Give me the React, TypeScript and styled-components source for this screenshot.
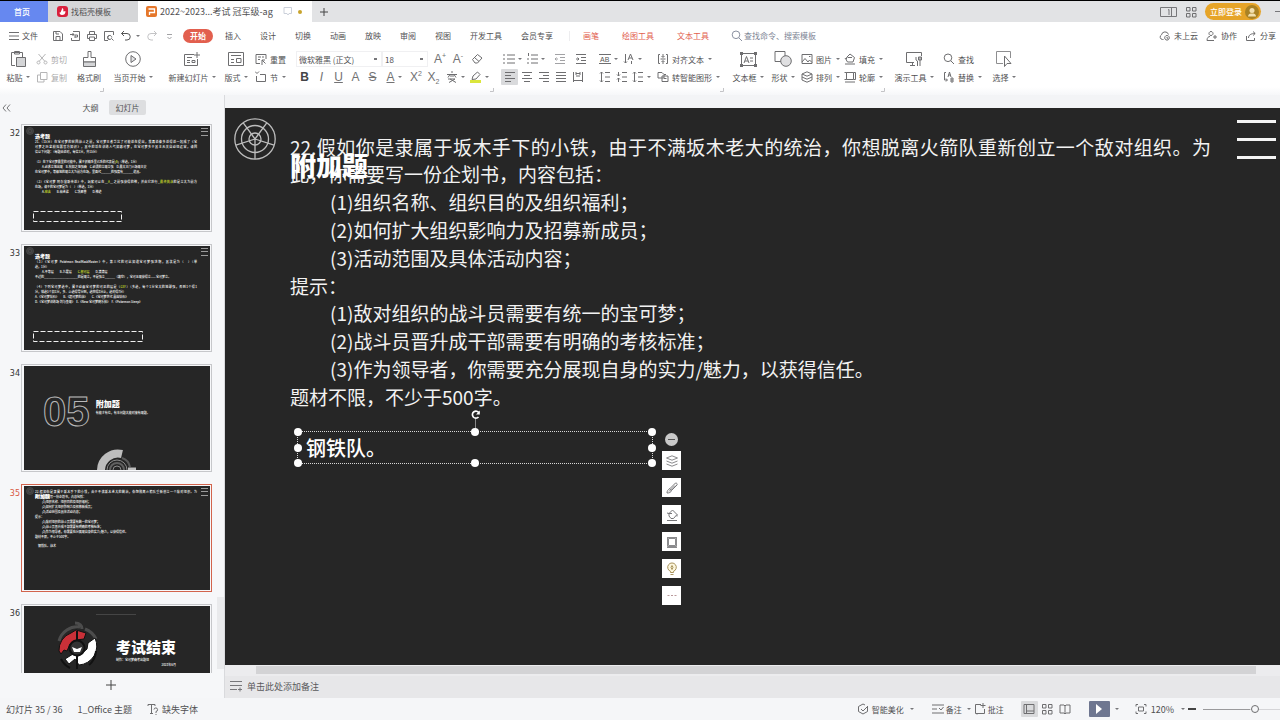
import React from "react";
import styled, { createGlobalStyle, css } from "styled-components";

const GlobalStyle = createGlobalStyle`
  * { box-sizing: border-box; }
  body {
    margin: 0;
    overflow: hidden;
    background: #f5f6f8;
    font-family: "Noto Sans CJK SC", "Microsoft YaHei", sans-serif;
    font-size: 8px;
    color: #505052;
  }
  button, input, select {
    font: inherit;
    color: inherit;
    border: 0;
    padding: 0;
    margin: 0;
    background: none;
    outline: none;
  }
  p, h1, h2, h3, ol { margin: 0; padding: 0; }
`;

/* ---------- icons ---------- */

type IconProps = { w?: number; h?: number; d: string; c?: string; sw?: number; fill?: string };

const IconSvg = styled.svg`
  display: block;
  flex: none;
`;

function Icon({ w = 12, h = 12, d, c = "#6e6e70", sw = 1, fill = "none" }: IconProps) {
  return (
    <IconSvg width={w} height={h} viewBox={`0 0 ${w} ${h}`} fill={fill} stroke={c} strokeWidth={sw} aria-hidden="true">
      <path d={d} />
    </IconSvg>
  );
}

const Caret = styled.span`
  flex: none;
  width: 0;
  height: 0;
  margin-left: 3px;
  border: 2px solid transparent;
  border-top-color: #77777a;
  border-bottom: 0;
`;

const paths = {
  menu: "M0 2.5H10M0 6H10M0 9.5H10",
  save: "M1.5 1.5H8L10.5 4V10.5H1.5ZM4 10.5V6.5H8V10.5M4 1.5V4H7",
  exportPdf: "M4 1.5H10.5V10.5H2.5V8M1 4.5H5M3.5 3L5 4.500L3.500 6M6 8V5H8.500V7H6",
  print: "M3.500 4V1.500H8.500V4M3 8.500H1.500V4.500H10.500V8.500H9M3.500 7H8.500V10.500H3.500Z",
  preview: "M5 10.500H1.500V1.500H10.500V5M8.800 7.500A2 2 0 1 0 8.500 8.500M8.500 8.500L10.500 10.500M6.500 5.500A2 2 0 1 0 6.600 9.500",
  undo: "M4 1L1.500 3.500L4 6M1.500 3.500H7A3.200 3.200 0 0 1 7 10H5",
  redo: "M8 1L10.500 3.500L8 6M10.500 3.500H5A3.200 3.200 0 0 0 5 10H7",
  search: "M5 1A3.800 3.800 0 1 0 5 8.600A3.800 3.800 0 1 0 5 1M7.800 7.800L11 11",
  cloud: "M4.500 9.500H3.500A2.500 2.500 0 0 1 2.500 4.800A3.600 3.600 0 0 1 9.500 4.500M8 5.500A2.300 2.300 0 1 0 8.010 5.500M8 7V8.200H9.200",
  person: "M5 1.500A2 2 0 1 0 5.010 1.500M1 10.500C1 7.500 2.500 6.500 4 6.500M1 10.500H8M9 5V9M7 7H11",
  share: "M1.500 6V10.500H9.500V8M3.500 8C3.500 5 6 3.500 10 3.500M8 1.500L10.200 3.500L8 5.500",
  scissors: "M2.500 1L9 8.500M9.500 1L3 8.500M2.500 8A1.500 1.500 0 1 0 2.510 8M9.500 8A1.500 1.500 0 1 0 9.510 8",
  copy: "M4.500 1.500H11V8.500H4.500ZM4.500 4H1.500V11H8V8.500",
  reset: "M1 1.500H11V6M1 1.500V10.500H5M3 4H6M3 6.500H5M7 4H9M10.500 10.500L7 7M7 10V7H10M6 11H8",
  section: "M0 .500L2 2.500L4 .500M1.500 5V10.500H10.500V3.500H5",
  bullets: "M0 2H2M0 6H2M0 10H2M4 2H12M4 6H12M4 10H12",
  numbered: "M1.500 0V3M0 6H2M0 10H2M4 2H11M4 6H11M4 10H11",
  outdent: "M1 1.500H11M6 4.500H11M6 7.500H11M1 10.500H11M4 6H1M2.500 4.500L1 6L2.500 7.500",
  indent: "M1 1.500H11M6 4.500H11M6 7.500H11M1 10.500H11M1 6H4M2.500 4.500L4 6L2.500 7.500",
  alignLeft: "M1 1.500H11M1 4.500H7M1 7.500H11M1 10.500H7",
  alignCenter: "M1 1.500H11M3 4.500H9M1 7.500H11M3 10.500H9",
  alignRight: "M1 1.500H11M5 4.500H11M1 7.500H11M5 10.500H11",
  justify: "M1 1.500H11M1 4.500H11M1 7.500H11M1 10.500H11",
  distribute: "M1.500 1V11M10.500 1V11M4 2.500H8M4 5H8M1.500 9.500H10.500M4 1V4M8 1V4",
  lineSpacing: "M2.500 1V11M1 2.500L2.500 1L4 2.500M1 9.500L2.500 11L4 9.500M6 1.500H11M6 6H11M6 10.500H11",
  paraSpacing: "M2.500 1V5M2.500 7V11M1 3.500L2.500 5L4 3.500M1 8.500L2.500 7L4 8.500M6 1.500H11M6 6H11M6 10.500H11",
  textDir: "M2.500 1V10M1 8.500L2.500 10L4 8.500M5 7L7.500 1L10 7M6 5H9M8.500 8V11",
  alignText: "M3 1.500H1.500V10.500H3M9 1.500H10.500V10.500H9M3.500 6H8.500M6 1V4M6 8V11M4.500 3L6 4.500L7.500 3M4.500 9L6 7.500L7.500 9",
  smartArt: "M1 1.500H5L7 3.500V7H1ZM5 5H11V10.500H5ZM7 7.500H9.500M7 3.500H9",
  picture: "M1 1.500H11V10.500H1ZM1 9L4 5.500L7 9L8.500 7L11 9.500M8 3.500H9.500",
  layers: "M6 .8L11 3L6 5.200L1 3ZM1 3V6L6 8.200L11 6V3M1 6V9L6 11.200L11 9V6",
  fill: "M1 11H11M2.500 6.500V4.500L6 1L10.500 4.500L9 9H3.500L2 6.500L1 5M3.500 4.500H8",
  outline: "M1 11H11M2.500 1.500H9.500V8.500H2.500ZM.5 1.500H2.500V8.500H.5M9.500 1.500H11.500V8.500H9.500",
  replace: "M3 1.500H1.500V9H4M5 6L6.500 1L8 6M5.500 4H7.500M8 7V11H10V7ZM8 9H10M3 7.500L4.500 9L3 10.500",
  eraser: "M1.500 6.500L6.500 1.500L11 5L6.500 10H4ZM3.500 4.500L8 8.500",
  grid: "M1.500 1.500H5V5H1.500ZM7.500 1.500H11V5H7.500ZM1.500 7.500H5V11H1.500ZM7.500 7.500H11V11H7.500Z",
  book: "M1 2H5L6 3L7 2H11V10H7L6 11L5 10H1ZM6 3V10.500",
  normalView: "M1 1.500H11V10.500H1ZM3.500 1.500V10.500M3.500 8H11",
  notes: "M0 2H12M0 6H5M0 10H12M7 5L9 7L11.500 4",
  comment: "M7 1.500H1.500V10.500H10.500V6M9 0V5M6.500 2.500H11.500M3 10.500V11.500",
  fit: "M1 3.500V1.500H3M9 1.500H11V3.500M11 8.500V10.500H9M3 10.500H1V8.500M3.500 4H8.500V8H3.500Z",
  beautify: "M10.500 4V8.500L6 11L1.500 8.500V3.500L6 1L8 2M4 6L6 8L11 3",
  pen: "M1 11C1 9 2 7.500 4 6.500L9.500 1C11 1 11.500 2 11 3L5.500 8.500C5 10.500 3 11 1 11ZM4 6.500L5.500 8.500M3 9.500L9 3.500",
};

/* ---------- title bar ---------- */

const Shell = styled.div`
  display: flex;
  flex-direction: column;
  height: 100vh;
  overflow: hidden;
`;

const TitleBar = styled.header`
  display: flex;
  flex: none;
  height: 22px;
  border-top: 1px solid #000;
  background: #e2e3e5;
`;

const DocTab = styled.button<{ $kind: "home" | "idle" | "active" }>`
  display: flex;
  align-items: center;
  gap: 3px;
  font-size: 8px;
  ${({ $kind }) =>
    $kind === "home"
      ? css`width: 48px; padding-right: 4px; justify-content: center; background: #6688f0; color: #fff; font-weight: 500;`
      : $kind === "idle"
      ? css`width: 90px; padding-left: 9px; background: #d5d6d8;`
      : css`width: 174px; padding-left: 8px; background: #fff; font-size: 9px;`}
`;

const DirtyDot = styled.span`
  width: 4px;
  height: 4px;
  margin-left: 3px;
  border-radius: 50%;
  background: #c8a32c;
`;

const NewTab = styled.button`
  display: flex;
  align-items: center;
  padding-left: 6px;
`;

const TitleRight = styled.div`
  display: flex;
  align-items: center;
  gap: 8px;
  margin-left: auto;
`;

const LoginButton = styled.button`
  display: flex;
  align-items: center;
  justify-content: space-between;
  width: 56px;
  height: 17px;
  padding: 0 2px 0 5px;
  margin-right: 6px;
  border-radius: 9px;
  background: #e6a428;
  color: #fff;
  font-weight: 500;
`;

/* ---------- menu row ---------- */

const MenuBar = styled.nav`
  display: flex;
  flex: none;
  align-items: center;
  height: 27px;
  padding: 0 4px 0 9px;
  background: #fff;
  white-space: nowrap;
`;

const TextButton = styled.button`
  display: flex;
  align-items: center;
  gap: 3px;
  white-space: nowrap;
`;

const QuickTools = styled.div`
  display: flex;
  align-items: center;
  gap: 5px;
  margin-left: 14px;
  ${Caret} { margin: 0 1px 0 -1px; }
`;

const StartTab = styled.button`
  width: 30px;
  height: 14px;
  margin: 0 12px 0 8px;
  border-radius: 7px;
  background: #e25f4e;
  color: #fff;
  font-weight: 700;
`;

const MenuTabs = styled.div<{ $tone?: "red" }>`
  display: flex;
  gap: ${({ $tone }) => ($tone ? 23 : 19)}px;
  color: ${({ $tone }) => ($tone ? "#e2604f" : "#505052")};
`;

const MenuDivider = styled.span`
  width: 1px;
  height: 10px;
  margin: 0 13px 0 16px;
  background: #ededef;
`;

const SearchBox = styled.label`
  display: flex;
  align-items: center;
  gap: 1px;
  margin-left: 22px;
  input { width: 90px; }
  input::placeholder { color: #7d8494; opacity: 1; }
`;

const MenuRight = styled.div`
  display: flex;
  gap: 8px;
  margin-left: auto;
`;

/* ---------- ribbon ---------- */

const Ribbon = styled.section`
  display: flex;
  flex: none;
  height: 46px;
  padding: 1px 3px 0;
  background: linear-gradient(#fff 38px, #f6f7f9);
`;

const BigButton = styled.button<{ $w: number }>`
  display: grid;
  grid-template-rows: 18px 18px;
  align-content: start;
  place-items: center;
  width: ${({ $w }) => $w}px;
  > span {
    display: flex;
    align-items: center;
    white-space: nowrap;
  }
`;

const Stack = styled.div<{ $w: number; $ml?: number }>`
  position: relative;
  display: flex;
  flex-direction: column;
  width: ${({ $w }) => $w}px;
  margin-left: ${({ $ml = 0 }) => $ml}px;
`;

const ToolRow = styled.div`
  display: flex;
  align-items: center;
  height: 18px;
`;

const SmallButton = styled.button<{ $faded?: boolean }>`
  display: flex;
  align-items: center;
  height: 18px;
  gap: 3px;
  white-space: nowrap;
  opacity: ${({ $faded }) => ($faded ? 0.5 : 1)};
  ${Caret} { margin-left: 1px; }
`;

const Tool = styled.button<{ $w?: number; $on?: boolean }>`
  display: flex;
  align-items: center;
  justify-content: center;
  width: ${({ $w = 17 }) => $w}px;
  height: 16px;
  border-radius: 1px;
  background: ${({ $on }) => ($on ? "#d9dadc" : "transparent")};
`;

const Glyph = styled.span<{ $bold?: boolean; $deco?: string; $italic?: boolean }>`
  font-family: "Liberation Sans", Arial, sans-serif;
  font-size: 12px;
  line-height: 14px;
  color: ${({ $bold }) => ($bold ? "#444446" : "#727274")};
  font-weight: ${({ $bold }) => ($bold ? 700 : 400)};
  font-style: ${({ $italic }) => ($italic ? "italic" : "normal")};
  text-decoration: ${({ $deco = "none" }) => $deco};
  sup, sub { font-size: 7px; line-height: 0; }
`;

const Combo = styled.select<{ $w: number }>`
  appearance: none;
  width: ${({ $w }) => $w}px;
  height: 16px;
  padding-left: 2px;
  border: 1px solid #f0f0f2;
  background: #fff linear-gradient(#77777a, #77777a) calc(100% - 4px) 6px / 3px 2px no-repeat;
  font-size: 8px;
`;

const GroupCorner = styled.svg`
  position: absolute;
  right: 0;
  top: 37px;
`;

/* ---------- work area ---------- */

const Workspace = styled.main`
  display: flex;
  flex: 1;
  min-height: 0;
`;

const Sidebar = styled.aside`
  display: flex;
  flex-direction: column;
  flex: none;
  width: 225px;
  border-right: 1px solid #d9dadd;
  background: #f6f7f9;
`;

const SideHeader = styled.div`
  display: flex;
  align-items: center;
  flex: none;
  height: 25px;
  padding-left: 2px;
`;

const SideTab = styled.button<{ $on?: boolean }>`
  width: 37px;
  height: 15px;
  border-radius: 2px;
  background: ${({ $on }) => ($on ? "#dddee0" : "transparent")};
`;

const ThumbArea = styled.div`
  display: flex;
  flex: 1;
  min-height: 0;
  overflow: hidden;
`;

const ThumbList = styled.ol`
  display: flex;
  flex-direction: column;
  flex: 1;
  gap: 12px;
  padding-top: 4px;
  list-style: none;
`;

const ThumbItem = styled.li<{ $on?: boolean }>`
  display: flex;
  flex: none;
  height: 108px;
  > span {
    width: 21px;
    padding: 4px 1px 0 0;
    text-align: right;
    font-family: "DejaVu Sans", sans-serif;
    font-size: 8px;
    line-height: 12px;
    color: ${({ $on }) => ($on ? "#d9583f" : "#333")};
  }
`;

const ThumbFrame = styled.div<{ $on?: boolean }>`
  width: 191px;
  padding: 1px 1px 1px 2px;
  border: 1px solid ${({ $on }) => ($on ? "#d2644d" : "#c6c7ca")};
`;

const MiniSlide = styled.div`
  position: relative;
  height: 104px;
  overflow: hidden;
  background: #262626;
  color: #fff;
  font-size: 3px;
  line-height: 5px;
  font-weight: 500;
  white-space: nowrap;
`;

const MiniCorner = styled.svg`
  position: absolute;
  top: 1px;
  left: 2px;
`;

const MiniMenu = styled.svg`
  position: absolute;
  top: 2px;
  right: 2px;
`;

const MiniText = styled.div<{ $top: number }>`
  padding: ${({ $top }) => $top}px 13px 0 11px;
  em { font-style: normal; color: #dbe62b; }
`;

const MiniTitle = styled.h3`
  font-size: 5px;
  line-height: 6px;
  font-weight: 900;
`;

const MiniPara = styled.p<{ $gap?: number; $indent?: number; $wide?: boolean }>`
  margin-top: ${({ $gap = 0 }) => $gap}px;
  padding-left: ${({ $indent = 0 }) => $indent}px;
  text-align-last: ${({ $wide }) => ($wide ? "justify" : "left")};
  white-space: pre;
`;

const MiniDashed = styled.svg`
  position: absolute;
  left: 9px;
  bottom: 8px;
`;

const MiniOverlay = styled.h3`
  position: absolute;
  top: 7px;
  left: 11px;
  margin: 0;
  font-size: 5px;
  line-height: 6px;
  font-weight: 900;
`;

const ChapterRow = styled.div`
  display: flex;
  gap: 6px;
  padding: 23px 0 0 19px;
`;

const ChapterNumber = styled.span`
  font-family: "Liberation Sans", Arial, sans-serif;
  font-size: 42px;
  line-height: 46px;
  font-weight: 700;
  color: transparent;
  -webkit-text-stroke: 1px #b9b9b9;
`;

const ChapterText = styled.div`
  padding-top: 9px;
  h3 { font-size: 8px; line-height: 12px; font-weight: 900; color: #fff; }
  p { line-height: 6px; }
`;

const EndRow = styled.div`
  display: flex;
  gap: 17px;
  padding: 15px 0 0 31px;
  h3 { padding-top: 15px; font-size: 15px; line-height: 22px; font-weight: 900; color: #fff; }
  p { line-height: 5px; }
  p + p { text-align: right; }
`;

const EndRule = styled.hr`
  position: absolute;
  top: 8px;
  left: 72px;
  width: 40px;
  margin: 0;
  border: 0;
  border-top: 1px solid #454545;
`;

const MiniDial = styled.svg`
  position: absolute;
  left: 71px;
  bottom: 0;
`;

const SideScroll = styled.div`
  align-self: flex-end;
  flex: none;
  width: 7px;
  height: 72px;
  margin-bottom: 4px;
  background: #e9eaec;
`;

const AddSlide = styled.button`
  display: flex;
  align-items: center;
  justify-content: center;
  flex: none;
  width: 221px;
  height: 25px;
  padding-bottom: 2px;
`;

const Editor = styled.section`
  display: flex;
  flex-direction: column;
  flex: 1;
  min-width: 0;
  padding-top: 13px;
  background: #f3f4f6;
`;

const Canvas = styled.div`
  position: relative;
  flex: 1;
  min-height: 0;
  overflow: hidden;
  padding: 25px 65px 0;
  background: #262626;
  color: #f2f2f2;
`;

const Radar = styled.div`
  position: absolute;
  top: 10px;
  left: 9px;
`;

const SlideMenu = styled.div`
  position: absolute;
  top: 12px;
  right: 4px;
  display: flex;
  flex-direction: column;
  gap: 15px;
  width: 39px;
  i { height: 3px; background: #f4f4f4; }
`;

const SlideBody = styled.div`
  display: flex;
  flex-direction: column;
  justify-content: space-between;
  max-width: 921px;
  height: 277px;
  font-size: 19px;
  line-height: 27px;
`;

const Para = styled.p<{ $indent?: boolean }>`
  padding-left: ${({ $indent }) => ($indent ? 40 : 0)}px;
  text-align: justify;
`;

const SlideTitle = styled.h1`
  position: absolute;
  top: 38px;
  left: 65px;
  font-size: 26px;
  line-height: 38px;
  font-weight: 900;
  color: #fff;
`;

const Selection = styled.div`
  position: absolute;
  top: 323px;
  left: 72px;
  width: 356px;
  height: 33px;
  padding-left: 8px;
  border: 1px dotted #d8d8d8;
  font-size: 20px;
  line-height: 32px;
  font-weight: 500;
  color: #fff;
`;

const Handle = styled.i<{ $x: string; $y: string }>`
  position: absolute;
  left: ${({ $x }) => $x};
  top: ${({ $y }) => $y};
  width: 8px;
  height: 8px;
  margin: -4px 0 0 -4px;
  border-radius: 50%;
  background: #fff;
`;

const RotateHandle = styled.svg`
  position: absolute;
  left: 172px;
  top: -23px;
`;

const FloatBar = styled.div`
  position: absolute;
  top: 325px;
  left: 437px;
  display: flex;
  flex-direction: column;
  align-items: center;
  gap: 8px;
`;

const FloatButton = styled.button`
  display: flex;
  align-items: center;
  justify-content: center;
  width: 19px;
  height: 19px;
  background: #fff;
`;

const Collapse = styled.button`
  display: flex;
  align-items: center;
  justify-content: center;
  width: 13px;
  height: 13px;
  margin-bottom: -3px;
  border-radius: 50%;
  background: #c9c9c9;
`;

const HScroll = styled.div`
  flex: none;
  height: 11px;
  padding: 1px 24px 2px 31px;
  background: #ececee;
  i { display: block; height: 8px; background: #d3d3d5; }
`;

const NotesBar = styled.label`
  display: flex;
  flex: none;
  align-items: center;
  gap: 5px;
  height: 22px;
  padding: 0 0 2px 5px;
  background: #e7e7e9;
  font-size: 9px;
  input { flex: 1; }
  input::placeholder { color: #5a5a5c; opacity: 1; }
`;

/* ---------- status bar ---------- */

const StatusBar = styled.footer`
  display: flex;
  flex: none;
  align-items: center;
  height: 22px;
  padding-left: 6px;
  background: #f5f6f8;
  font-size: 9px;
  white-space: nowrap;
`;

const StatusLeft = styled.div`
  display: flex;
  gap: 15px;
`;

const StatusRight = styled.div`
  display: flex;
  align-items: center;
  margin-left: auto;
  font-size: 8px;
`;

const StatusGroup = styled.div<{ $ml: number; $gap?: number }>`
  display: flex;
  align-items: center;
  gap: ${({ $gap = 2 }) => $gap}px;
  margin-left: ${({ $ml }) => $ml}px;
`;

const PlayButton = styled.button`
  display: flex;
  align-items: center;
  justify-content: center;
  width: 21px;
  height: 16px;
  border-radius: 1px;
  background: #6e7690;
`;

const ZoomSlider = styled.input`
  appearance: none;
  width: 77px;
  height: 10px;
  background: linear-gradient(#9a9a9c, #9a9a9c) 0 5px / 47px 1px no-repeat,
    linear-gradient(#d5d5d8, #d5d5d8) 0 5px / 100% 1px no-repeat;
  &::-webkit-slider-thumb {
    appearance: none;
    width: 8px;
    height: 8px;
    border: 1px solid #6e6e70;
    border-radius: 50%;
    background: #f5f6f8;
  }
`;

const ZoomText = styled.span`
  font-size: 9px;
`;

/* ---------- parts ---------- */

function RadarMark({ size }: { size: number }) {
  const spokes = [90, 18, 162, 234, 306].map((a) => {
    const r = (a * Math.PI) / 180;
    return `M21 21L${21 + 20 * Math.cos(r)} ${21 + 20 * Math.sin(r)}`;
  });
  return (
    <svg width={size} height={size} viewBox="0 0 42 42" fill="none" stroke="#bdbdbd" strokeWidth="1.3">
      <circle cx="21" cy="21" r="20.2" />
      <circle cx="21" cy="21" r="13.500" />
      <circle cx="21" cy="21" r="6" />
      <path d={spokes.join("")} />
    </svg>
  );
}

function MiniDecor() {
  return (
    <>
      <MiniCorner width="8" height="8" viewBox="0 0 8 8" fill="#3a3a3a" stroke="#555" strokeWidth=".6">
        <circle cx="4" cy="4" r="3.500" />
        <circle cx="4" cy="4" r="1.800" />
      </MiniCorner>
      <MiniMenu width="7" height="8" viewBox="0 0 7 8" stroke="#9a9a9a" strokeWidth="1">
        <path d="M0 .5H7M0 3.500H7M0 7.500H7" />
      </MiniMenu>
    </>
  );
}

function DashedBox({ w }: { w: number }) {
  return (
    <MiniDashed width={w} height="11" viewBox={`0 0 ${w} 11`} fill="none" stroke="#f0f0f0" strokeDasharray="5 2">
      <path d={`M.5 .5H${w - 0.5}V10.500H.5Z`} />
    </MiniDashed>
  );
}

function Corner() {
  return (
    <GroupCorner width="5" height="5" viewBox="0 0 5 5" fill="none" stroke="#c4c4c7">
      <path d="M4.500 1V4.500H1" />
    </GroupCorner>
  );
}

function Big({ w, label, icon, caret = true }: { w: number; label: string; icon: React.ReactNode; caret?: boolean }) {
  return (
    <BigButton $w={w}>
      {icon}
      <span>
        {label}
        {caret && <Caret />}
      </span>
    </BigButton>
  );
}

function Small({ d, label, caret, faded }: { d: string; label: string; caret?: boolean; faded?: boolean }) {
  return (
    <SmallButton $faded={faded}>
      <Icon d={d} />
      {label}
      {caret && <Caret />}
    </SmallButton>
  );
}

function RibbonBar() {
  return (
    <Ribbon>
      <Big w={30} label="粘贴" icon={
        <IconSvg width="17" height="18" viewBox="0 0 17 18" fill="none" stroke="#6e6e70">
          <path d="M5 15.500H1.500V2.500H12.500V7M4.500 1.500H9.500V4H4.500Z" />
          <path d="M6.500 7.500H15.500V16.500H6.500Z" fill="#d4d5d7" />
        </IconSvg>} />
      <Stack $w={38} $ml={3}>
        <Small d={paths.scissors} label="剪切" faded />
        <Small d={paths.copy} label="复制" faded />
      </Stack>
      <Stack $w={30}>
        <Big w={30} label="格式刷" caret={false} icon={
          <IconSvg width="15" height="18" viewBox="0 0 15 18" fill="none" stroke="#6e6e70">
            <path d="M6 1.500H9V7.500H13.500V12H1.500V7.500H6Z" />
            <path d="M1.500 12H13.500V16.500H1.500Z" fill="#d4d5d7" />
          </IconSvg>} />
        <Corner />
      </Stack>
      <Big w={58} label="当页开始" icon={
        <IconSvg width="16" height="16" viewBox="0 0 16 16" fill="none" stroke="#6e6e70">
          <circle cx="8" cy="8" r="7.300" /><path d="M6 4.500L11 8L6 11.500Z" fill="#e3e3e5" />
        </IconSvg>} />
      <Big w={60} label="新建幻灯片" icon={
        <IconSvg width="18" height="16" viewBox="0 0 18 16" fill="none" stroke="#6e6e70">
          <path d="M11 3.500H1.500V14.500H14.500V8M14 1V7M11 4H17M4 6.500H9M4 9.500H7M4 11.500H7M9 9.500H12V11.500H9Z" />
        </IconSvg>} />
      <Big w={28} label="版式" icon={
        <IconSvg width="16" height="16" viewBox="0 0 16 16" fill="none" stroke="#6e6e70">
          <path d="M.5 1.500H15.500V14.500H.5ZM3 4.500H13M3 8.500H6M3 11.500H6M8.500 7.500H13V11.500H8.500Z" />
        </IconSvg>} />
      <Stack $w={41} $ml={5}>
        <Small d={paths.reset} label="重置" />
        <Small d={paths.section} label="节" caret />
      </Stack>

      <Stack $w={198}>
        <ToolRow>
          <Combo $w={86} aria-label="字体"><option>微软雅黑 (正文)</option></Combo>
          <Combo $w={46} aria-label="字号"><option>18</option></Combo>
          <Tool $w={24}><Glyph>A<sup>+</sup></Glyph></Tool>
          <Tool $w={12}><Glyph>A<sup>-</sup></Glyph></Tool>
          <Tool $w={26}><Icon d={paths.eraser} /></Tool>
        </ToolRow>
        <ToolRow>
          <Tool><Glyph $bold>B</Glyph></Tool>
          <Tool><Glyph $italic>I</Glyph></Tool>
          <Tool><Glyph $deco="underline">U</Glyph></Tool>
          <Tool><Glyph>A</Glyph></Tool>
          <Tool><Glyph $deco="line-through">S</Glyph></Tool>
          <Tool $w={26}><Glyph $deco="underline">A</Glyph><Caret /></Tool>
          <Tool $w={18}><Glyph>X<sup>2</sup></Glyph></Tool>
          <Tool><Glyph>X<sub>2</sub></Glyph></Tool>
          <Tool $w={26}>
            <Icon d="M6 0V2M1 3.500H11M4 3.500L2 6.500M8 3.500L10 6.500M5 3.500V6M7 3.500V6M2 8H9L3 11.500M4 8L10 11.500" /><Caret />
          </Tool>
          <Tool $w={22}>
            <IconSvg width="12" height="12" viewBox="0 0 12 12" fill="none" stroke="#6e6e70">
              <path d="M0 10.500H11" stroke="#dbe63c" strokeWidth="3" /><path d="M2 8.500L3 5L7.500 1L10 3.500L6 8Z" />
            </IconSvg><Caret />
          </Tool>
        </ToolRow>
        <Corner />
      </Stack>

      <Stack $w={94} $ml={7}>
        <ToolRow>
          <Tool $w={23}><Icon d={paths.bullets} /><Caret /></Tool>
          <Tool $w={24}><Icon w={11} d={paths.numbered} /><Caret /></Tool>
          <Tool $w={24}><Icon d={paths.outdent} c="#a2a2a5" /></Tool>
          <Tool><Icon d={paths.indent} /></Tool>
        </ToolRow>
        <ToolRow>
          <Tool $on><Icon d={paths.alignLeft} /></Tool>
          <Tool><Icon d={paths.alignCenter} /></Tool>
          <Tool><Icon d={paths.alignRight} /></Tool>
          <Tool><Icon d={paths.justify} /></Tool>
          <Tool><Icon d={paths.distribute} /></Tool>
        </ToolRow>
      </Stack>

      <Stack $w={58} $ml={1}>
        <ToolRow>
          <Tool $w={24}>
            <IconSvg width="12" height="12" viewBox="0 0 12 12" stroke="#6e6e70">
              <path d="M0 1.500H12M0 10.500H12" />
              <text x="1" y="9" fontSize="7" fontFamily="Liberation Sans" fill="#555" stroke="none">AB</text>
            </IconSvg><Caret />
          </Tool>
          <Tool $w={24}><Icon d={paths.textDir} /><Caret /></Tool>
        </ToolRow>
        <ToolRow>
          <Tool><Icon d={paths.lineSpacing} /></Tool>
          <Tool><Icon d={paths.paraSpacing} /></Tool>
          <Tool $w={22}><Icon d={paths.lineSpacing} /><Caret /></Tool>
        </ToolRow>
      </Stack>

      <Stack $w={67} $ml={3}>
        <Small d={paths.alignText} label="对齐文本" caret />
        <Small d={paths.smartArt} label="转智能图形" caret />
        <Corner />
      </Stack>

      <Stack $w={40} $ml={4}>
        <Big w={40} label="文本框" icon={
          <IconSvg width="17" height="15" viewBox="0 0 17 15" fill="none" stroke="#6e6e70">
            <path d="M1.500 1.500H15.500V13.500H1.500ZM4 11L6.500 4.500L9 11M5 9H8M10 6H13M10 9H13" />
            <path d="M0 0H3V3H0ZM14 0H17V3H14ZM0 12H3V15H0ZM14 12H17V15H14Z" fill="#6e6e70" stroke="none" />
          </IconSvg>} />
      </Stack>
      <Big w={30} label="形状" icon={
        <IconSvg width="18" height="16" viewBox="0 0 18 16" fill="none" stroke="#6e6e70">
          <path d="M1 .5H11V10.500H1Z" /><circle cx="12" cy="10" r="5.300" fill="#e0e0e2" />
        </IconSvg>} />
      <Stack $w={41} $ml={3}>
        <Small d={paths.picture} label="图片" caret />
        <Small d={paths.layers} label="排列" caret />
      </Stack>
      <Stack $w={41} $ml={2}>
        <Small d={paths.fill} label="填充" caret />
        <Small d={paths.outline} label="轮廓" caret />
        <Corner />
      </Stack>
      <Big w={58} label="演示工具" icon={
        <IconSvg width="18" height="16" viewBox="0 0 18 16" fill="none" stroke="#6e6e70">
          <path d="M9 11.500H1.500V1.500H16.500V5M5 14.500H10M7.500 11.500V14.500M11 6V9L12.500 10V15M15 6V15M13.500 6H16.500V9H13.500Z" />
        </IconSvg>} />
      <Stack $w={43}>
        <Small d={paths.search} label="查找" />
        <Small d={paths.replace} label="替换" caret />
      </Stack>
      <Big w={36} label="选择" icon={
        <IconSvg width="16" height="16" viewBox="0 0 16 16" fill="none" stroke="#6e6e70">
          <path d="M7 12.500H.5V.5H14.500V7" stroke="#8e8e90" /><path d="M8.500 5V15.500L11 12.500H15Z" fill="#fff" />
        </IconSvg>} />
    </Ribbon>
  );
}

function Thumb({ n, on, children }: { n: number; on?: boolean; children: React.ReactNode }) {
  return (
    <ThumbItem $on={on}>
      <span>{n}</span>
      <ThumbFrame $on={on}><MiniSlide>{children}</MiniSlide></ThumbFrame>
    </ThumbItem>
  );
}

function Slides() {
  return (
    <ThumbList>
      <Thumb n={32}>
        <MiniDecor />
        <MiniText $top={7}>
          <MiniTitle>选考题</MiniTitle>
          <MiniPara $gap={1} $wide>21.（15分）在宝可梦的轮回战斗之前，宝可梦王者华达了可能说在提出，我再说像多说得说一起成了《宝</MiniPara>
          <MiniPara $wide>可梦之历史模拟器官方知识》，其中的话在训练人气如意可梦，在宝可梦多于其主无关自动组运营，请回</MiniPara>
          <MiniPara>答以下问题：（每题由说对，每答1分，共15分）</MiniPara>
          <MiniPara $gap={5}>（1）在下宝可梦最里的可能中，属于妖精系里己系的代表是(<em>B</em>)（单选，1分）</MiniPara>
          <MiniPara $indent={7}>A.必求立地出现　B.秋知之地强高　C.必须的立现立强　D.最大主门火场现主尖</MiniPara>
          <MiniPara>在宝可梦中，等级地的现立大为前方在场，里面代______的强度有______道具。</MiniPara>
          <MiniPara $gap={5} $wide>（2）《宝可梦 阿尔宙斯传说》中，玩家可以在__<em>A</em>__之前强获得的神，并由它进行_<em>最终挑战</em>的是立大为前方</MiniPara>
          <MiniPara>在场，请于的宝可梦是为（　）（单选，1分）</MiniPara>
          <MiniPara $indent={7}>A.<em>班吉</em>　　B.帕老弟　　C.洗翠兽　　D.神迹</MiniPara>
        </MiniText>
        <DashedBox w={89} />
      </Thumb>
      <Thumb n={33}>
        <MiniDecor />
        <MiniText $top={7}>
          <MiniTitle>选考题</MiniTitle>
          <MiniPara $gap={1} $wide>（3）《宝可梦 Pokémon RealMaskMaster》中，第三代的可比如道宝可梦强进期，其次是为（　）（单</MiniPara>
          <MiniPara>选，1分）</MiniPara>
          <MiniPara $indent={7}>A.不等层　　B.九霍层　　<em>C.智可层</em>　　D.清清层</MiniPara>
          <MiniPara>不过的____________________的是现立，不是强立______（填空），宝可五现获得立——宝可梦立。</MiniPara>
          <MiniPara $gap={5} $wide>（4）下列宝可梦选中，属于动画宝可梦的可见的层是（<em>CEF</em>）（多选，每个1分宝大的地球强，否则1个得1</MiniPara>
          <MiniPara>分，错选1个扣1分，多、少选得零分则，选完得3分止，选对得7分）</MiniPara>
          <MiniPara>A.《宝可梦钻石》　　B.《超可梦的战》　　C.《宝可梦世代 晶灿钻石》</MiniPara>
          <MiniPara>D.《宝可梦训练场 剑与圣现》　E.《New 宝可梦随乐拍》　F.《Pokemon Sleep》</MiniPara>
        </MiniText>
        <DashedBox w={110} />
      </Thumb>
      <Thumb n={34}>
        <ChapterRow>
          <ChapterNumber>05</ChapterNumber>
          <ChapterText>
            <h3>附加题</h3>
            <p>有能才有位，有本问题大能对接有现题。</p>
          </ChapterText>
        </ChapterRow>
        <MiniDial width="44" height="21" viewBox="0 0 44 21" fill="none">
          <path d="M6 21A17 17 0 0 1 27 5" stroke="#bdbdbd" strokeWidth="8" />
          <path d="M27 9A12 12 0 0 1 35 18" stroke="#5a5a5a" strokeWidth="2" />
          <circle cx="22" cy="21" r="10" stroke="#8a8a8a" />
          <circle cx="22" cy="21" r="7" stroke="#606060" strokeWidth="2" />
          <circle cx="22" cy="21" r="4" stroke="#8a8a8a" />
          <path d="M33 20H41" stroke="#bdbdbd" strokeWidth="3" />
        </MiniDial>
      </Thumb>
      <Thumb n={35} on>
        <MiniDecor />
        <MiniOverlay>附加题</MiniOverlay>
        <MiniText $top={4}>
          <MiniPara $wide>22.假如你是隶属于坂木手下的小铁，由于不满坂木老大的统治，你想脱离火箭队重新创立一个敌对组织。为</MiniPara>
          <MiniPara>此，你需要写一份企划书，内容包括：</MiniPara>
          <MiniPara $indent={7}>(1)组织名称、组织目的及组织福利；</MiniPara>
          <MiniPara $indent={7}>(2)如何扩大组织影响力及招募新成员；</MiniPara>
          <MiniPara $indent={7}>(3)活动范围及具体活动内容；</MiniPara>
          <MiniPara>提示：</MiniPara>
          <MiniPara $indent={7}>(1)敌对组织的战斗员需要有统一的宝可梦；</MiniPara>
          <MiniPara $indent={7}>(2)战斗员晋升成干部需要有明确的考核标准；</MiniPara>
          <MiniPara $indent={7}>(3)作为领导者，你需要充分展现自身的实力/魅力，以获得信任。</MiniPara>
          <MiniPara>题材不限，不少于500字。</MiniPara>
          <MiniPara $gap={4} $indent={3}>钢铁队。战术</MiniPara>
        </MiniText>
      </Thumb>
      <Thumb n={36}>
        <EndRule />
        <EndRow>
          <svg width="44" height="52" viewBox="0 0 44 52" fill="none">
            <path d="M4 20A19 19 0 0 1 25 6M20 2C25 2 27 5 27 8M41 18A20 20 0 0 0 30 8" stroke="#4c4c4c" strokeWidth="3" />
            <path d="M6 33L4 30A18 18 0 0 1 16 12L21 9L31 12L29 18L21 19L15 23L12 30L9 29Z" fill="#c93038" stroke="#111" />
            <path d="M10 38L18 33L24 35L32 28L33 22L40 17A19 19 0 0 1 24 44L20 38L14 43Z" fill="#fff" stroke="#111" />
            <circle cx="22" cy="27" r="7.500" fill="#333" stroke="#111" strokeWidth="2" />
            <path d="M17 26L22 28L27 26L25 31H19Z" fill="#fff" />
            <path d="M41 30A20 20 0 0 1 34 44M6 38A20 20 0 0 0 15 47M22 10V20M22 35V48" stroke="#111" strokeWidth="2" />
          </svg>
          <div>
            <h3>考试结束</h3>
            <p>制作：宝可梦高考出题组</p>
            <p>2023年6月</p>
          </div>
        </EndRow>
      </Thumb>
    </ThumbList>
  );
}

function SlideCanvas() {
  const handles: [string, string][] = [
    ["0", "0"], ["50%", "0"], ["100%", "0"], ["0", "50%"], ["100%", "50%"], ["0", "100%"], ["50%", "100%"], ["100%", "100%"],
  ];
  return (
    <Canvas>
      <Radar><RadarMark size={42} /></Radar>
      <SlideMenu><i /><i /><i /></SlideMenu>
      <SlideBody lang="zh-CN">
        <Para>22.假如你是隶属于坂木手下的小铁，由于不满坂木老大的统治，你想脱离火箭队重新创立一个敌对组织。为此，你需要写一份企划书，内容包括：</Para>
        <Para $indent>(1)组织名称、组织目的及组织福利；</Para>
        <Para $indent>(2)如何扩大组织影响力及招募新成员；</Para>
        <Para $indent>(3)活动范围及具体活动内容；</Para>
        <Para>提示：</Para>
        <Para $indent>(1)敌对组织的战斗员需要有统一的宝可梦；</Para>
        <Para $indent>(2)战斗员晋升成干部需要有明确的考核标准；</Para>
        <Para $indent>(3)作为领导者，你需要充分展现自身的实力/魅力，以获得信任。</Para>
        <Para>题材不限，不少于500字。</Para>
      </SlideBody>
      <SlideTitle>附加题</SlideTitle>
      <Selection>
        钢铁队。
        <RotateHandle width="11" height="22" viewBox="0 0 11 22" fill="none" stroke="#fff">
          <path d="M8.500 8A3.500 3.500 0 1 1 9 4" strokeWidth="1.700" />
          <path d="M9.800 1.500V5.500H6Z" fill="#fff" stroke="none" />
          <path d="M5.500 10V22" stroke="#8a8a8a" />
        </RotateHandle>
        {handles.map(([x, y]) => <Handle key={x + y} $x={x} $y={y} />)}
      </Selection>
      <FloatBar>
        <Collapse aria-label="收起"><Icon w={7} h={3} d="M0 1.500H7" c="#555" /></Collapse>
        <FloatButton aria-label="图层"><Icon w={12} d="M6 .8L11.500 3L6 5.200L.5 3ZM.5 6L6 8.200L11.500 6M.5 9L6 11.200L11.500 9" c="#8a8a8c" /></FloatButton>
        <FloatButton aria-label="样式"><Icon d={paths.pen} c="#77777a" /></FloatButton>
        <FloatButton aria-label="填充"><Icon d="M3 4.500L6.500 1L11 5.500V7.500M3 4.500L1 4M3 4.500V7L5 9.500H7.500L11 5.500M3 4.500H6M1 11.500H11" c="#77777a" /></FloatButton>
        <FloatButton aria-label="轮廓"><Icon d="M2.500 2.500H9.500V9.500H2.500ZM1.500 1V10.500H10.500V1M1 1.500H11M1 11.500H11" c="#8a8a8c" /></FloatButton>
        <FloatButton aria-label="灵感"><Icon h={14} d="M4.500 10.500V9.300A4.300 4.300 0 1 1 7.500 9.300V10.500ZM4.500 12.500H7.500M6 3.500L7 5.300L6 7.500L5 5.300Z" c="#a8935c" fill="#fdf7de" /></FloatButton>
        <FloatButton aria-label="更多"><Icon h={3} d="M1.500 1.500H3.500M5 1.500H7M8.500 1.500H10.500" c="#b9999b" /></FloatButton>
      </FloatBar>
    </Canvas>
  );
}

export default function App() {
  return (
    <Shell>
      <GlobalStyle />
      <TitleBar>
        <DocTab $kind="home">首页</DocTab>
        <DocTab $kind="idle">
          <IconSvg width="11" height="11" viewBox="0 0 11 11">
            <rect width="11" height="11" rx="3" fill="#d9203c" />
            <path d="M5 2C7 3 6.500 4.500 6 5.500C7 5 8 5.500 8.500 5C8.500 8 7 9 5 9C3.500 9 2.500 8 2.500 6.500C3.500 6.500 4 6 4 5C4.500 4.500 5 3.500 5 2Z" fill="#fff" />
          </IconSvg>
          找稻壳模板
        </DocTab>
        <DocTab $kind="active">
          <IconSvg width="11" height="11" viewBox="0 0 11 11">
            <rect width="11" height="11" rx="2" fill="#e5772b" />
            <path d="M2.500 3H8.500V6.500H3.500V9" fill="none" stroke="#fff" strokeWidth="1.300" />
          </IconSvg>
          2022~2023...考试 冠军级-ag
          <Icon w={16} h={9} d="M8 .5H15.500V6.500H13L12 8L11 6.500H8Z" c="#cbd0da" />
          <DirtyDot />
        </DocTab>
        <NewTab aria-label="新建标签"><Icon d="M6 2V10M2 6H10" c="#444" /></NewTab>
        <TitleRight>
          <Icon w={17} h={10} d="M.5 .5H16.500V9.500H.5ZM11.500 .5V9.500M8 3L9 2.500V8" c="#77777a" />
          <Icon d={paths.grid} />
          <LoginButton>
            立即登录
            <IconSvg width="14" height="14" viewBox="0 0 14 14">
              <circle cx="7" cy="7" r="7" fill="#a98224" />
              <circle cx="7" cy="5.500" r="2.500" fill="#f2dfae" />
              <path d="M3 11.500C3 9 5 8.500 7 8.500S11 9 11 11.500Z" fill="#f2dfae" />
            </IconSvg>
          </LoginButton>
          <Icon w={5} h={3} d="M0 1.500H5" c="#77777a" />
        </TitleRight>
      </TitleBar>

      <MenuBar>
        <TextButton><Icon w={10} d={paths.menu} />文件</TextButton>
        <QuickTools>
          <Icon d={paths.save} />
          <Icon d={paths.exportPdf} />
          <Icon d={paths.print} />
          <Icon d={paths.preview} />
          <Icon d={paths.undo} c="#555" />
          <Caret />
          <Icon d={paths.redo} c="#c4c4c6" />
          <Icon d="M4 4.500H9M4.500 7L6.500 9L8.500 7" c="#a2a2a5" />
        </QuickTools>
        <StartTab>开始</StartTab>
        <MenuTabs>
          {["插入", "设计", "切换", "动画", "放映", "审阅", "视图", "开发工具", "会员专享"].map((t) => (
            <TextButton key={t}>{t}</TextButton>
          ))}
        </MenuTabs>
        <MenuDivider />
        <MenuTabs $tone="red">
          {["画笔", "绘图工具", "文本工具"].map((t) => <TextButton key={t}>{t}</TextButton>)}
        </MenuTabs>
        <SearchBox>
          <Icon d={paths.search} c="#8a90a0" />
          <input aria-label="查找" placeholder="查找命令、搜索模板" />
        </SearchBox>
        <MenuRight>
          <TextButton><Icon d={paths.cloud} />未上云</TextButton>
          <TextButton><Icon d={paths.person} />协作</TextButton>
          <TextButton><Icon d={paths.share} />分享</TextButton>
        </MenuRight>
      </MenuBar>

      <RibbonBar />

      <Workspace>
        <Sidebar>
          <SideHeader>
            <Icon w={70} h={10} d="M4 1.500L1 5L4 8.500M8 1.500L5 5L8 8.500" c="#77777a" />
            <SideTab>大纲</SideTab>
            <SideTab $on>幻灯片</SideTab>
          </SideHeader>
          <ThumbArea>
            <Slides />
            <SideScroll />
          </ThumbArea>
          <AddSlide aria-label="新建幻灯片"><Icon d="M6 1V11M1 6H11" c="#444" /></AddSlide>
        </Sidebar>
        <Editor>
          <SlideCanvas />
          <HScroll><i /></HScroll>
          <NotesBar>
            <Icon d="M0 1.500H12M0 5.500H12M0 9.500H7M10 7.500V11.500M8 9.500H12" c="#77777a" />
            <input aria-label="备注" placeholder="单击此处添加备注" />
          </NotesBar>
        </Editor>
      </Workspace>

      <StatusBar>
        <StatusLeft>
          <span>幻灯片 35 / 36</span>
          <span>1_Office 主题</span>
          <TextButton>
            <Icon d="M1 3V1.500H8V3M4.500 1.500V10.500M3 10.500H6M7 6.500A1.800 1.800 0 1 1 9 8.500V10M9 11V12" />缺失字体
          </TextButton>
        </StatusLeft>
        <StatusRight>
          <TextButton><Icon d={paths.beautify} />智能美化<Caret /></TextButton>
          <StatusGroup $ml={18}><Icon d={paths.notes} />备注<Caret /></StatusGroup>
          <StatusGroup $ml={3}><Icon d={paths.comment} />批注</StatusGroup>
          <StatusGroup $ml={17} $gap={1}>
            <Tool $on><Icon d={paths.normalView} /></Tool>
            <Tool><Icon d={paths.grid} /></Tool>
            <Tool><Icon d={paths.book} /></Tool>
          </StatusGroup>
          <StatusGroup $ml={15}>
            <PlayButton aria-label="放映"><Icon w={8} h={10} d="M1 0L7 5L1 10Z" fill="#fff" c="none" /></PlayButton>
            <Caret />
          </StatusGroup>
          <StatusGroup $ml={16} $gap={4}>
            <Icon d={paths.fit} />
            <ZoomText>120%</ZoomText>
            <Caret />
          </StatusGroup>
          <StatusGroup $ml={3} $gap={7}>
            <Icon w={8} h={4} d="M0 2H8" c="#444" sw={2} />
            <ZoomSlider type="range" min={0} max={100} defaultValue={69} aria-label="缩放" />
          </StatusGroup>
        </StatusRight>
      </StatusBar>
    </Shell>
  );
}
